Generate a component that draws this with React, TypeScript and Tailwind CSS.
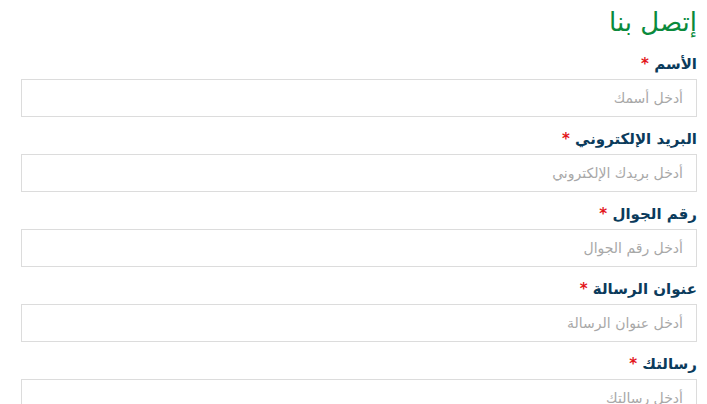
import React from "react";

const fields = [
  { label: "الأسم", ph: "أدخل أسمك" },
  { label: "البريد الإلكتروني", ph: "أدخل بريدك الإلكتروني" },
  { label: "رقم الجوال", ph: "أدخل رقم الجوال" },
  { label: "عنوان الرسالة", ph: "أدخل عنوان الرسالة" },
  { label: "رسالتك", ph: "أدخل رسالتك" },
];

export default function App() {
  return (
    <div
      dir="rtl"
      className="bg-white w-[707px] h-[404px] overflow-hidden pr-[10px] pl-[21px]"
      style={{ fontFamily: '"DejaVu Sans", sans-serif' }}
    >
      <h1 className="text-[26px] h-[54px] leading-[40px] text-[#0a8a3c] pt-[2px]">إتصل بنا</h1>
      <div className="flex flex-col gap-[12px]">
        {fields.map((f) => (
          <div key={f.label} className="flex flex-col">
            <label className="block h-[21px] text-[15px] leading-[21px] font-bold text-[#0b3b5c] mb-[4px] overflow-visible">
              {f.label} <span className="text-[#e3161b]">*</span>
            </label>
            <div className="h-[38px] border border-[#dcdcdc] flex items-center pr-[13px] text-[14px] leading-[20px] text-[#a8a8a8]">
              {f.ph}
            </div>
          </div>
        ))}
      </div>
    </div>
  );
}
